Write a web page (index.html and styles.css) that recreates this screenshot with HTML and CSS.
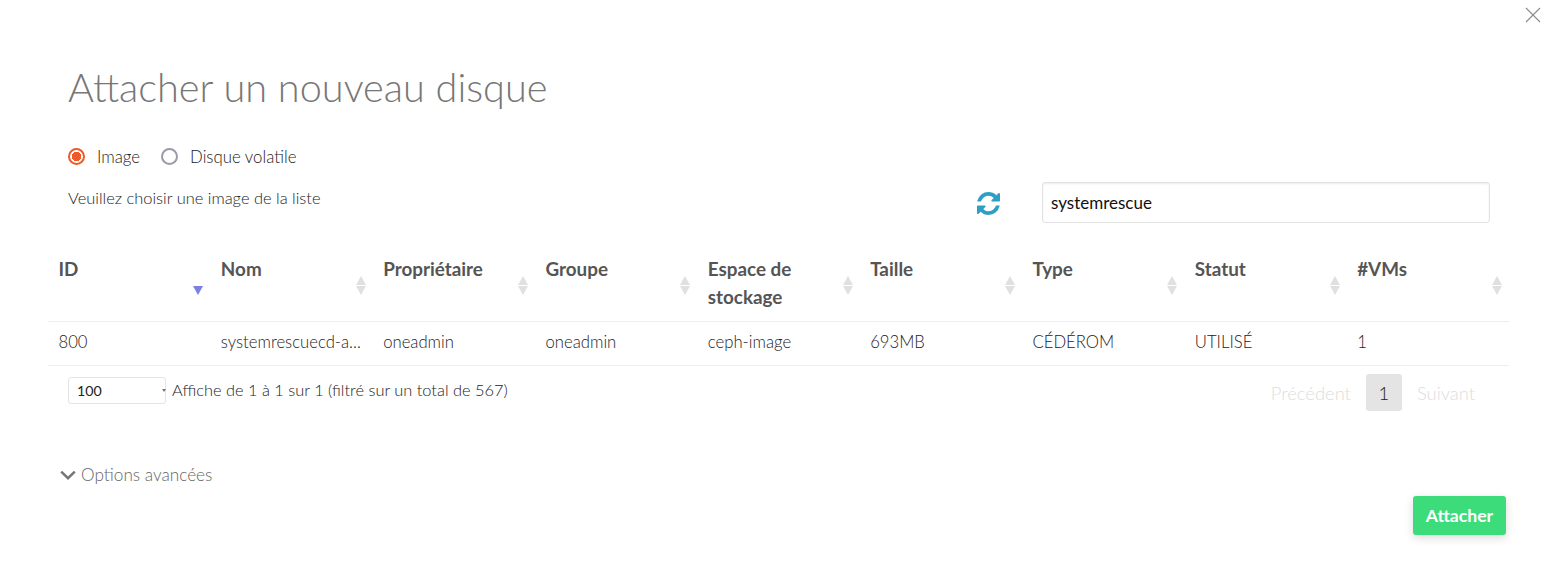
FILE: index.html
```html
<!DOCTYPE html>
<html lang="fr">
<head>
<meta charset="utf-8">
<title>Attacher un nouveau disque</title>
<link rel="stylesheet" href="styles.css">
</head>
<body>
<div class="modal">
  <button class="close" aria-label="Fermer">
    <svg width="16" height="16" viewBox="0 0 16 16"><path d="M1 1l14 14M15 1L1 15" stroke="#8a8a8a" stroke-width="1.1" fill="none"/></svg>
  </button>
  <h1 class="title">Attacher un nouveau disque</h1>
  <div class="radios">
    <label class="radio"><span class="dot dot-on"></span>Image</label>
    <label class="radio radio-dark"><span class="dot"></span>Disque volatile</label>
  </div>
  <div class="toolbar">
    <p class="hint">Veuillez choisir une image de la liste</p>
    <svg class="refresh" width="23" height="23" viewBox="0 0 1536 1536"><path fill="#2e9fc4" d="M1511 928q0 5-1 7-64 268-268 434.500t-478 166.500q-146 0-282.500-55t-243.500-157l-129 129q-19 19-45 19t-45-19-19-45v-448q0-26 19-45t45-19h448q26 0 45 19t19 45-19 45l-137 137q71 66 161 102t187 36q134 0 250-65t186-179q11-17 53-117 8-23 30-23h192q13 0 22.500 9.500t9.500 22.500zm25-800v448q0 26-19 45t-45 19h-448q-26 0-45-19t-19-45 19-45l138-138q-148-137-349-137-134 0-250 65t-186 179q-11 17-53 117-8 23-30 23h-199q-13 0-22.500-9.500t-9.500-22.500v-7q65-268 270-434.500t480-166.500q146 0 284 55.500t245 156.500l130-129q19-19 45-19t45 19 19 45z"/></svg>
    <input class="search" type="text" value="systemrescue">
  </div>
  <table class="grid">
    <thead>
      <tr>
        <th class="sorted">ID</th>
        <th>Nom</th>
        <th>Propriétaire</th>
        <th>Groupe</th>
        <th>Espace de stockage</th>
        <th>Taille</th>
        <th>Type</th>
        <th>Statut</th>
        <th>#VMs</th>
      </tr>
    </thead>
    <tbody>
      <tr>
        <td>800</td>
        <td>systemrescuecd-a...</td>
        <td>oneadmin</td>
        <td>oneadmin</td>
        <td>ceph-image</td>
        <td>693MB</td>
        <td>CÉDÉROM</td>
        <td>UTILISÉ</td>
        <td>1</td>
      </tr>
    </tbody>
  </table>
  <div class="footer-row">
    <div class="info">
      <div class="select"><span>100</span><i class="caret"></i></div>
      <span class="info-text">Affiche de 1 à 1 sur 1 (filtré sur un total de 567)</span>
    </div>
    <div class="pager">
      <span class="page-off">Précédent</span>
      <span class="page-on">1</span>
      <span class="page-off">Suivant</span>
    </div>
  </div>
  <div class="advanced">
    <svg width="16" height="10" viewBox="0 0 16 10"><path d="M1.200 1.600l6.800 6.600 6.800-6.600" stroke="#777" stroke-width="2.500" fill="none"/></svg>
    <span>Options avancées</span>
  </div>
  <div class="actions"><button class="attach">Attacher</button></div>
</div>
</body>
</html>
```
FILE: styles.css
```css
* { box-sizing: border-box; }
html, body { margin: 0; height: 100%; background: #fff; }
body { font-family: Lato, "Open Sans", sans-serif; font-size: 16.4px; font-weight: 300; color: #222; overflow: hidden; }
.modal { position: relative; height: 568px; padding: 61px 37px 0 48px; }
.close { position: absolute; top: 7px; right: 5px; padding: 0; border: 0; background: none; width: 16px; height: 16px; line-height: 0; }
.title { margin: 0 0 0 20px; font-size: 39.7px; font-weight: 300; line-height: 52px; color: #777; }
.radios { display: flex; margin: 31px 0 0 20px; height: 24px; align-items: center; gap: 21px; font-size: 16.8px; }
.radio { display: flex; align-items: center; gap: 12px; color: #222; }
.dot { width: 17px; height: 17px; border-radius: 50%; border: 2px solid #9a9aa8; background: #fff; }
.dot-on { border-color: #ee5a2a; background: radial-gradient(circle, #ee5a2a 0 4.5px, #fff 5px); }
.toolbar { display: flex; align-items: flex-start; margin: 14px 0 0 20px; height: 41px; padding-right: 19px; }
.hint { margin: 0; flex: 1; font-size: 16.45px; line-height: 20px; color: #222; padding-top: 6px; }
.refresh { margin: 10px 42px 0 0; }
.search { width: 448px; height: 41px; margin: 0; padding: 0 8px; border: 1px solid #e2e2e2; border-radius: 3px; font: 400 17px Lato, sans-serif; color: #111; box-shadow: inset 0 1px 2px rgba(0,0,0,.08); outline: none; }
.grid { width: 1461px; border-collapse: collapse; table-layout: fixed; margin-top: 19px; }
.grid th { position: relative; text-align: left; vertical-align: top; padding: 13px 10px 10px 10.5px; font-weight: 700; font-size: 18.85px; line-height: 28px; color: #555; height: 79px; border-bottom: 1px solid #eee; }
.grid th::before, .grid th::after { content: ""; position: absolute; right: 7px; border-left: 5px solid transparent; border-right: 5px solid transparent; }
.grid th::before { top: 34px; border-bottom: 9px solid #e0e0e0; }
.grid th::after { top: 44px; border-top: 9px solid #e0e0e0; }
.grid th.sorted::before { display: none; }
.grid th.sorted::after { border-top-color: #7b7fe6; }
.grid td { padding: 0 10px 4px 10.5px; height: 44px; font-size: 16.7px; color: #222; border-bottom: 1px solid #eee; white-space: nowrap; }
.footer-row { display: flex; justify-content: space-between; margin-top: 8px; padding: 0 34px 0 20px; }
.info { display: flex; align-items: flex-start; gap: 6px; line-height: 20px; color: #222; }
.info-text { padding-top: 6px; }
.select { position: relative; width: 98px; height: 27px; border: 1px solid #e4e4e4; border-radius: 3px; padding: 0 8px; font-weight: 400; font-size: 14.2px; line-height: 26px; color: #222; margin-top: 3px; }
.caret { position: absolute; right: -1px; top: 11px; border-left: 2px solid transparent; border-right: 2px solid transparent; border-top: 3px solid #777; }
.pager { display: flex; align-items: center; gap: 15px; font-size: 18.4px; }
.page-off { color: #ddd; }
.page-on { width: 36px; height: 37px; background: #e4e4e4; border-radius: 3px; display: flex; align-items: center; justify-content: center; color: #222; }
.advanced { display: flex; align-items: center; gap: 5px; margin: 53px 0 0 12px; color: #666; line-height: 22px; font-size: 17.2px; }
.actions { display: flex; justify-content: flex-end; margin-top: 10px; padding-right: 3px; }
.attach { width: 93px; height: 39px; border: 0; border-radius: 3px; background: #3cdc7a; color: #fff; font: 700 17.6px Lato, sans-serif; box-shadow: 0 3px 10px rgba(0,0,0,.14); padding: 0; }
```
